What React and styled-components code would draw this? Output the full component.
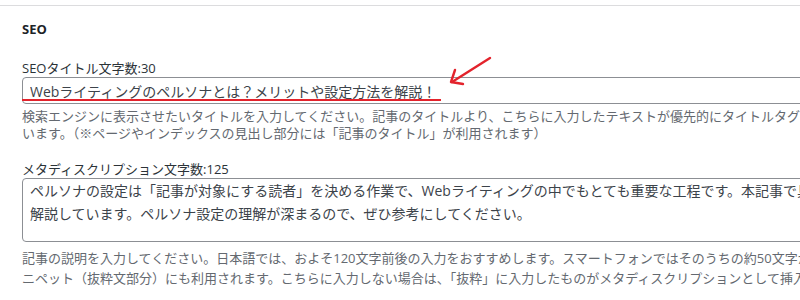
import React from 'react';
import styled, { createGlobalStyle } from 'styled-components';

const GlobalStyle = createGlobalStyle`
  body {
    margin: 0;
    background: #ffffff;
    font-family: "Open Sans", "Noto Sans CJK JP", sans-serif;
    color: #1e1e1e;
  }
`;

const description =
  'ペルソナの設定は「記事が対象にする読者」を決める作業で、Webライティングの中でもとても重要な工程です。本記事で具体的な手順を\n' +
  '解説しています。ペルソナ設定の理解が深まるので、ぜひ参考にしてください。';

function App() {
  return <>
    <GlobalStyle />
    <Panel>
      <Heading>SEO</Heading>
      <Field>
        <Label>SEOタイトル文字数:30</Label>
        <InputWrap>
          <TextInput readOnly value="Webライティングのペルソナとは？メリットや設定方法を解説！" />
          <Underline />
          <Arrow width="48" height="36" viewBox="0 0 48 36">
            <path d="M44 5 L6 29" stroke="#e3232c" strokeWidth="2.4" strokeLinecap="round" fill="none" />
            <path d="M9 17 L5 29 L17 31" stroke="#e3232c" strokeWidth="2.4" strokeLinecap="round" strokeLinejoin="round" fill="none" />
          </Arrow>
        </InputWrap>
        <Help $gap={4} $lh={17}>
          検索エンジンに表示させたいタイトルを入力してください。記事のタイトルより、こちらに入力したテキストが優先的にタイトルタグに挿入されます。
          <br />
          います。（※ページやインデックスの見出し部分には「記事のタイトル」が利用されます）
        </Help>
      </Field>
      <Field>
        <Label>メタディスクリプション文字数:125</Label>
        <TextArea readOnly value={description} />
        <Help $gap={6} $lh={20}>
          記事の説明を入力してください。日本語では、およそ120文字前後の入力をおすすめします。スマートフォンではそのうちの約50文字が表示されます。
          <br />
          ニペット（抜粋文部分）にも利用されます。こちらに入力しない場合は、「抜粋」に入力したものがメタディスクリプションとして挿入されます。
        </Help>
      </Field>
    </Panel>
  </>;
}

const Panel = styled.div`
  margin-top: 5px;
  border-top: 1px solid #dcdcde;
  padding: 14px 0 0 22px;
  height: 294px;
  overflow: hidden;
  display: flex;
  flex-direction: column;
`;

const Heading = styled.h2`
  margin: 0 0 22px;
  font-size: 13px;
  font-weight: 700;
  line-height: 18px;
  color: #1d2327;
`;

const Field = styled.div`
  display: flex;
  flex-direction: column;
  margin-bottom: 19px;
`;

const Label = styled.label`
  font-size: 13px;
  line-height: 16px;
  color: #2c3338;
  white-space: nowrap;
`;

const InputWrap = styled.div`
  position: relative;
  margin-top: 1px;
`;

const TextInput = styled.input`
  box-sizing: border-box;
  width: 820px;
  height: 27px;
  padding: 0 7px;
  border: 1px solid #8c8f94;
  border-radius: 4px;
  font-family: "Open Sans", "Noto Sans CJK JP", sans-serif;
  font-size: 14px;
  color: #3c434a;
  outline: none;
`;

const Underline = styled.div`
  position: absolute;
  left: 0;
  top: 22px;
  width: 419px;
  height: 2px;
  background: #e3232c;
`;

const Arrow = styled.svg`
  position: absolute;
  left: 424px;
  top: -24px;
`;

const Help = styled.p`
  margin: ${p => p.$gap}px 0 0;
  font-size: 13px;
  line-height: ${p => p.$lh}px;
  color: #646970;
  white-space: nowrap;
`;

const TextArea = styled.textarea`
  box-sizing: border-box;
  width: 1100px;
  height: 64px;
  margin-top: 1px;
  padding: 0 7px;
  border: 1px solid #8c8f94;
  border-radius: 4px;
  resize: none;
  overflow: hidden;
  white-space: pre;
  font-family: "Open Sans", "Noto Sans CJK JP", sans-serif;
  font-size: 14px;
  line-height: 23px;
  color: #3c434a;
  outline: none;
`;

export default App;
